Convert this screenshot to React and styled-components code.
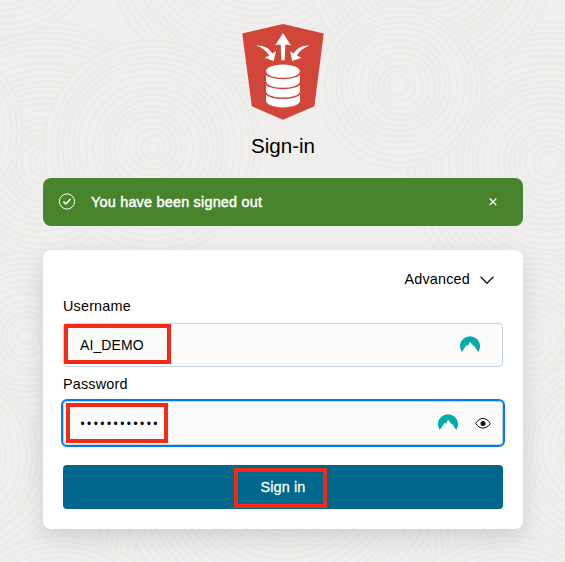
import React from 'react';
import styled, { createGlobalStyle } from 'styled-components';

const GlobalStyle = createGlobalStyle`
  * { box-sizing: border-box; }
  body {
    margin: 0;
    background: #f0efed;
    color: #000;
    font-family: "Liberation Sans", Arial, sans-serif;
    font-size: 14px;
  }
`;

const Page = styled.div`
  position: relative;
  isolation: isolate;
  display: flex;
  flex-direction: column;
  align-items: center;
  height: 562px;
  padding: 24px 42px 0 43px;
  overflow: hidden;
`;

const Backdrop = styled.svg`
  position: absolute;
  inset: 0;
  z-index: -1;
`;

const Logo = styled.svg`
  display: block;
  width: 82px;
  height: 96px;
`;

const Title = styled.h1`
  margin: 14px 0 0;
  height: 24px;
  font-size: 20.6px;
  font-weight: 400;
  line-height: 24px;
`;

const Alert = styled.div`
  display: flex;
  align-items: center;
  width: 480px;
  height: 48px;
  margin-top: 20px;
  padding: 0 25px 0 15px;
  border-radius: 8px;
  background: #48842c;
  color: #fff;
`;

const AlertText = styled.p`
  flex: 1;
  margin: 0 0 0 15px;
  font-size: 14.4px;
  letter-spacing: 0.22px;
  -webkit-text-stroke: 0.45px #fff;
`;

const Card = styled.form`
  display: flex;
  flex-direction: column;
  width: 480px;
  height: 279px;
  margin-top: 24px;
  padding: 17px 20px 0;
  border-radius: 8px;
  background: #fff;
  box-shadow: 0 8px 22px rgba(0, 0, 0, 0.13);
`;

const AdvancedToggle = styled.div`
  display: flex;
  align-items: center;
  align-self: flex-end;
  gap: 10px;
  height: 24px;
  padding-right: 9px;
  font-size: 14.4px;
  letter-spacing: 0.2px;
`;

const Label = styled.label`
  height: 20px;
  margin-top: ${(p) => p.$gap}px;
  font-size: 14.4px;
  line-height: 20px;
  letter-spacing: 0.18px;
`;

const Field = styled.div`
  position: relative;
  display: flex;
  align-items: center;
  height: 44px;
  margin-top: ${(p) => p.$gap}px;
  padding: 0 ${(p) => p.$end}px 0 16px;
  border: 1px solid #c5d3de;
  border-radius: 4px;
  background: #fcfcfc;
  outline: ${(p) => (p.$focused ? '2px solid #0077f5' : 'none')};
`;

const Value = styled.span`
  flex: 1;
  padding-top: ${(p) => (p.$masked ? 2 : 0)}px;
  padding-left: ${(p) => (p.$masked ? 0.5 : 0)}px;
  font-size: ${(p) => (p.$masked ? 12 : 14)}px;
  letter-spacing: ${(p) => (p.$masked ? 2.42 : 0.1)}px;
`;

const FieldIcons = styled.div`
  display: flex;
  align-items: center;
  gap: 17px;
`;

const BadgeSvg = styled.svg`
  display: block;
  margin-bottom: 1px;
`;

const SubmitButton = styled.button`
  position: relative;
  height: 44px;
  margin-top: 20px;
  padding: 0;
  border: 0;
  border-radius: 4px;
  background: #00688c;
  color: #fff;
  font: 14.4px "Liberation Sans", Arial, sans-serif;
  letter-spacing: 0.15px;
  -webkit-text-stroke: 0.3px #fff;
`;

const Highlight = styled.span`
  position: absolute;
  top: ${(p) => p.$top}px;
  left: ${(p) => p.$left}px;
  width: ${(p) => p.$width}px;
  height: 40px;
  border: 4px solid #f22a16;
`;

const rippleDiscs = [
  [280, 560, 230], [-60, 430, 190], [610, 430, 180],
  [45, 162, 142], [549, 162, 142],
  [260, -70, 160], [430, -45, 126], [0, -70, 106],
  [152, 147, 108], [400, 86, 82],
  [-70, 130, 92], [27, 337, 86], [531, 337, 86],
  [-55, 455, 92], [600, 450, 92], [285, 462, 170],
  [60, 650, 116], [508, 650, 116],
];

function Ripples() {
  return (
    <Backdrop width="565" height="562" viewBox="0 0 565 562" aria-hidden="true">
      {rippleDiscs.map(([cx, cy, r], i) => (
        <g key={i}>
          <circle cx={cx} cy={cy} r={r} fill="#f0efed" />
          {Array.from({ length: Math.floor(r / 6) }, (_, k) => (
            <ellipse
              key={k}
              cx={cx + Math.sin(k * 0.9) * 1.5}
              cy={cy + Math.cos(k * 0.7)}
              rx={r - k * 6}
              ry={r - k * 6 - 0.6}
              fill="none"
              stroke="#ecebe9"
              strokeWidth="2.2"
            />
          ))}
        </g>
      ))}
    </Backdrop>
  );
}

function DatabaseLogo() {
  return (
    <Logo viewBox="242 24 82 96">
      <path d="M283 24 323.7 33.5 314.4 106.3 283 119.8 251.8 106.3 242.3 33.5Z" fill="#d14638" />
      <g fill="#fff">
        <path d="M283 33 290.8 45.3 285.3 44.5 284.7 60.2H281.3L280.7 44.5 275.2 45.3Z" />
        <path d="M256.3 45.4C264 45.1 269.3 48.2 272.4 53.5L275.9 51.3 273.8 61 264.6 57.8 269.2 55.6C266.4 50.8 262.3 47.2 256.3 45.4Z" />
        <path d="M309.7 45.4C302 45.1 296.7 48.2 293.6 53.5L290.1 51.3 292.2 61 301.4 57.8 296.8 55.6C299.6 50.8 303.7 47.2 309.7 45.4Z" />
        <path d="M266 71.5C266 67.5 273.5 64.5 283 64.5S300 67.5 300 71.5V100.5C300 104.4 292.5 107.4 283 107.4S266 104.4 266 100.5Z" />
      </g>
      <g fill="none" stroke="#d14638" strokeWidth="1.5">
        <path d="M265.5 72C267 80.7 299 80.7 300.5 72" />
        <path d="M265.5 82C267 90.7 299 90.7 300.5 82" />
        <path d="M265.5 91.8C267 100.5 299 100.5 300.5 91.8" />
      </g>
    </Logo>
  );
}

function MountainBadge() {
  return (
    <BadgeSvg width="20" height="17" viewBox="0 0 20 17">
      <path d="M1.8 16A10 10 0 1 1 18.2 16L14 9.4 12.8 10.6 13.1 9.6 10.1 5.8 8.2 9.1 9.1 10.5 6.7 8.8Z" fill="#00aaad" />
    </BadgeSvg>
  );
}

function EyeIcon() {
  return (
    <svg width="16" height="12" viewBox="0 0 16 12">
      <path d="M.6 6.5C4.6-.2 11.4-.2 15.4 6.5 11.4 12.6 4.6 12.6.6 6.5Z" fill="none" stroke="#111" strokeWidth="1" />
      <circle cx="8" cy="6.5" r="2.5" fill="#111" />
    </svg>
  );
}

export default function App() {
  return (
    <>
      <GlobalStyle />
      <Page>
        <Ripples />
        <DatabaseLogo />
        <Title>Sign-in</Title>
        <Alert>
          <svg width="18" height="18" viewBox="0 0 18 18" fill="none" stroke="#fff">
            <circle cx="9" cy="8.5" r="7.6" strokeWidth="1" />
            <path d="M5.4 8.7 7.9 11 12.6 6" strokeWidth="1.6" />
          </svg>
          <AlertText>You have been signed out</AlertText>
          <svg width="10" height="10" viewBox="0 0 10 10" stroke="#fff" strokeWidth="1.3">
            <path d="M1.7 1.5 8.3 8.1M8.3 1.5 1.7 8.1" />
          </svg>
        </Alert>
        <Card>
          <AdvancedToggle>
            Advanced
            <svg width="14" height="10" viewBox="0 0 14 10" fill="none" stroke="#111" strokeWidth="1.4">
              <path d="M.6 2.8 7 9.2 13.4 2.8" />
            </svg>
          </AdvancedToggle>
          <Label $gap={5}>Username</Label>
          <Field $gap={7} $end={22}>
            <Value>AI_DEMO</Value>
            <FieldIcons><MountainBadge /></FieldIcons>
            <Highlight $top={0} $left={0} $width={107} />
          </Field>
          <Label $gap={7}>Password</Label>
          <Field $gap={7} $end={11} $focused>
            <Value $masked>••••••••••••</Value>
            <FieldIcons><MountainBadge /><EyeIcon /></FieldIcons>
            <Highlight $top={1} $left={2} $width={102} />
          </Field>
          <SubmitButton type="button">
            Sign in
            <Highlight $top={3} $left={171} $width={93} />
          </SubmitButton>
        </Card>
      </Page>
    </>
  );
}
